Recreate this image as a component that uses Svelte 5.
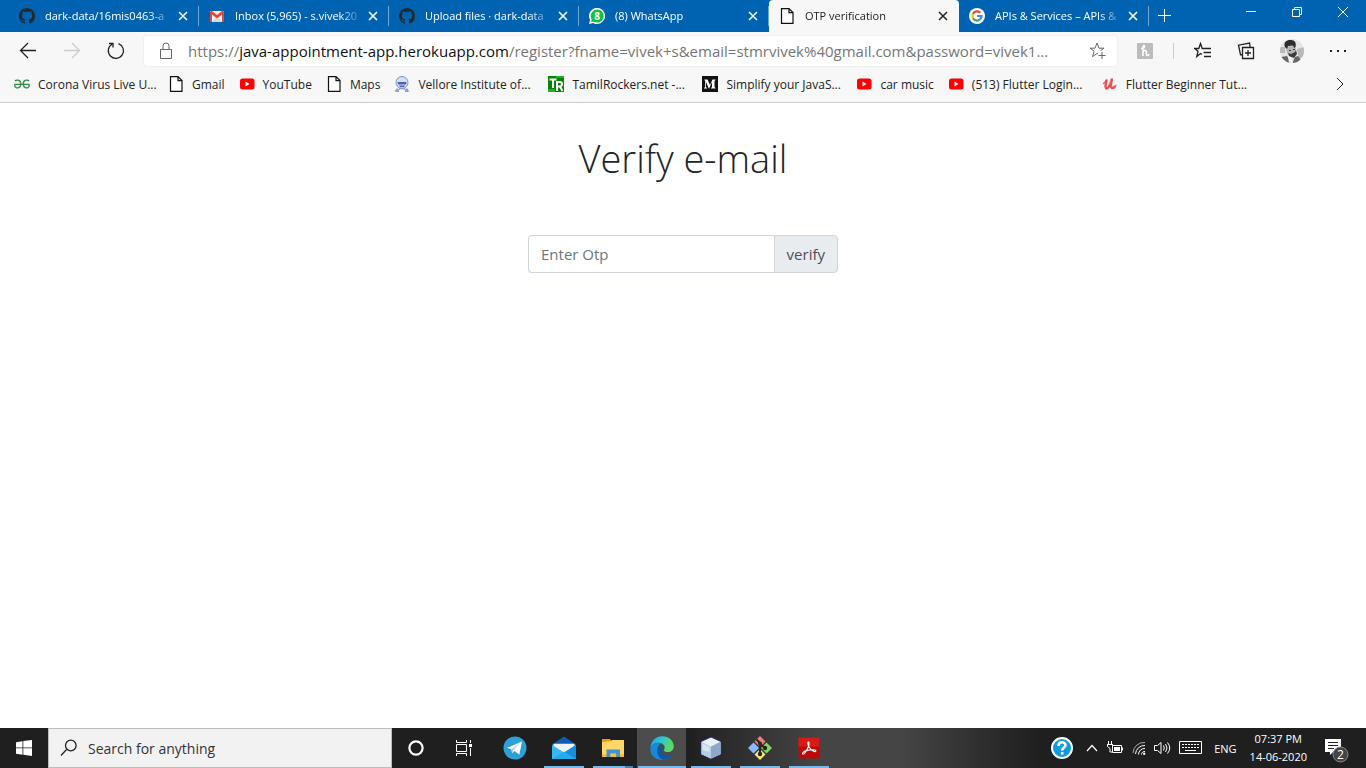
<script>
  const tabs = [
    { icon: 'github', title: 'dark-data/16mis0463-a' },
    { icon: 'gmail', title: 'Inbox (5,965) - s.vivek20' },
    { icon: 'github', title: 'Upload files · dark-data' },
    { icon: 'whatsapp', title: '(8) WhatsApp' },
    { icon: 'page', title: 'OTP verification', active: true },
    { icon: 'google', title: 'APIs & Services – APIs &' }
  ];
  const bookmarks = [
    { icon: 'gfg', title: 'Corona Virus Live U...', long: true },
    { icon: 'page', title: 'Gmail' },
    { icon: 'youtube', title: 'YouTube' },
    { icon: 'page', title: 'Maps' },
    { icon: 'vit', title: 'Vellore Institute of...', long: true },
    { icon: 'tr', title: 'TamilRockers.net -...', long: true },
    { icon: 'medium', title: 'Simplify your JavaS...', long: true },
    { icon: 'youtube', title: 'car music' },
    { icon: 'youtube', title: '(513) Flutter Login...', long: true },
    { icon: 'udemy', title: 'Flutter Beginner Tut...', long: true }
  ];
  const apps = [
    { icon: 'telegram', label: 'Telegram' },
    { icon: 'mail', label: 'Mail', open: true },
    { icon: 'folder', label: 'File Explorer', open: true, stacked: true },
    { icon: 'edge', label: 'Microsoft Edge', open: true, current: true },
    { icon: 'cube', label: 'NetBeans', open: true },
    { icon: 'git', label: 'Git', open: true },
    { icon: 'acrobat', label: 'Acrobat Reader', open: true }
  ];
</script>

{#snippet favicon(name)}
  <svg class="fav" viewBox="0 0 16 16" aria-hidden="true">
    {#if name === 'github'}
      <path fill="#24292e" d="M8 0C3.58 0 0 3.58 0 8c0 3.54 2.29 6.53 5.47 7.59.4.07.55-.17.55-.38 0-.19-.01-.82-.01-1.49-2.01.37-2.53-.49-2.69-.94-.09-.23-.48-.94-.82-1.13-.28-.15-.68-.52-.01-.53.63-.01 1.08.58 1.23.82.72 1.21 1.87.87 2.33.66.07-.52.28-.87.51-1.07-1.78-.2-3.64-.89-3.64-3.95 0-.87.31-1.59.82-2.15-.08-.2-.36-1.02.08-2.12 0 0 .67-.21 2.2.82.64-.18 1.32-.27 2-.27s1.36.09 2 .27c1.53-1.04 2.2-.82 2.2-.82.44 1.1.16 1.92.08 2.12.51.56.82 1.27.82 2.15 0 3.07-1.87 3.75-3.65 3.95.29.25.54.73.54 1.48 0 1.07-.01 1.93-.01 2.2 0 .21.15.46.55.38A8.01 8.01 0 0 0 16 8c0-4.42-3.58-8-8-8z" />
    {:else if name === 'gmail'}
      <path fill="#f2f2f2" d="M1 3h14v11H1z" />
      <path fill="#d9d9d9" d="M3 14l5-6 5 6z" />
      <path fill="#dd4b39" d="M1 14V4q0-1 1-1h1l5 4 5-4h1q1 0 1 1v10h-2V6.500L8 10.500 3 6.500V14z" />
    {:else if name === 'whatsapp'}
      <path fill="#fff" d="M0 16l1.100-4A8 8 0 1 1 4 14.900z" />
      <path fill="#10c143" d="M2 14l.7-2.500A6.500 6.500 0 1 1 5 13.700z" />
      <text x="8" y="12" text-anchor="middle" font-size="10" font-weight="700" fill="#fff">8</text>
    {:else if name === 'page'}
      <path fill="#fff" stroke="#111" stroke-width="1.200" d="M2.500.600h7.500l4 4v10.800H2.500zM10 .600v4h4" />
    {:else if name === 'google'}
      <circle cx="8" cy="8" r="8" fill="#fff" />
      <g fill="none" stroke-width="2.200">
        <path stroke="#ea4335" d="M3.900 5.900A4.600 4.600 0 0 1 11.300 4.800" />
        <path stroke="#fbbc05" d="M4 10.200a4.600 4.600 0 0 1-.1-4.300" />
        <path stroke="#34a853" d="M4 10.200a4.600 4.600 0 0 0 7 1.200" />
        <path stroke="#4285f4" d="M8 8h4.600a4.600 4.600 0 0 1-1.600 3.400" />
      </g>
    {:else if name === 'gfg'}
      <g fill="none" stroke="#2f8d46" stroke-width="1.300">
        <path d="M1 5.200C2 3.500 6.400 3.500 6.800 7.500 7 12.600 1.500 13 .900 10.300V8.300H8M15 5.200C14 3.500 9.600 3.500 9.200 7.500 9 12.600 14.500 13 15.100 10.300V8.300H8" />
      </g>
    {:else if name === 'youtube'}
      <rect x="1" y="2.500" width="14.500" height="11" rx="2.500" fill="#f00" />
      <path fill="#fff" d="M6.500 5.500v5L10.500 8z" />
    {:else if name === 'vit'}
      <circle cx="8" cy="6.500" r="6" fill="#d8def3" stroke="#8092cc" />
      <path fill="#4b65b0" d="M3.500 6h9l-.5 2.500H4zM5 9.500h6L10 11H6z" />
      <path fill="none" stroke="#8d9dd0" stroke-width="1.300" d="M3.500 12.500 2 14.500l2.500-.5L6 12.500h4l1.500 1.500 2.500.5-1.500-2M2 15.500h3M11 15.500h3" />
    {:else if name === 'tr'}
      <path fill="#078207" d="M0 0h16v16H0z" />
      <path fill="#1db51d" d="M8 0h8v2H8zM0 13h7v3H0z" />
      <path fill="none" stroke="#fff" stroke-width="2" d="M1.500 3.500h7M5 3v9M9 15V6h3q2 0 2 2.200T11 10.500H9m3 0 2.500 4.500" />
    {:else if name === 'medium'}
      <path fill="#111" d="M0 0h16v16H0z" />
      <path fill="#fff" d="M2.500 3.500h3L8 9l2.500-5.500h3V4l-1 1v6l1 1v.5H9V12l1-1V6l-2.800 6.500h-.4L4 6v5l1 1v.5H2V12l1.200-1V5l-.7-1z" />
    {:else if name === 'udemy'}
      <path fill="none" stroke="#eb5252" stroke-width="2.600" stroke-linecap="round" stroke-linejoin="round" d="M4.500 4.500C4 7 2.500 12 4.500 12.500 7 12.500 8.500 8 9.800 3.500 9 7 8.300 11.500 10 12q1.200.2 2.500-1" />
      <path fill="none" stroke="#eb5252" stroke-width="1.300" stroke-linecap="round" d="M1.500 7.500 4.500 4.500M12.500 11l1.500-1.500" />
    {/if}
  </svg>
{/snippet}

{#snippet appicon(name)}
  <svg class="app-icon" viewBox="0 0 24 24" aria-hidden="true">
    {#if name === 'telegram'}
      <circle cx="12" cy="12" r="11.500" fill="#2d9fd9" />
      <path fill="#fff" d="M4 11.800 19 5.500l-2.600 13-5-3.600-2.200 2.400-.8-4z" />
      <path fill="#aecfe2" d="m8.400 13.300 8-5.800-6.200 7-1 2.800z" />
    {:else if name === 'mail'}
      <path fill="#0a5eb5" d="M0 8.500 12 .500l12 8v5H0z" />
      <path fill="#f1f3f5" d="M1.500 7.800h21V11L12 18 1.500 11z" />
      <path fill="#37b8f6" d="M0 9l12 7.500L24 9v14H0z" />
      <path fill="#168de2" d="m24 9-12 7.500L24 23z" />
      <path fill="#25a9ef" d="m0 23 12-7.500L24 23z" />
    {:else if name === 'folder'}
      <path fill="#e79d08" d="M1 3h8l2 2.500H1z" />
      <path fill="#ffd668" d="M1 5.500 10 5l1-1h12v17H1z" />
      <path fill="#f5bf44" d="M1 18h22v3H1z" />
      <path fill="#3f94d1" d="M5.500 13.500h13.500v7.500h-3.800v-3.500H9.300V21H5.500z" />
    {:else if name === 'edge'}
      <defs>
        <linearGradient id="edgeTop" x1="0" y1="0" x2="1" y2=".35"><stop stop-color="#1c9ee6" /><stop offset=".5" stop-color="#30c6d0" /><stop offset="1" stop-color="#5cdb5c" /></linearGradient>
      </defs>
      <path fill="#168ad8" d="M.4 12.500C.7 7 6 4.500 11 7c-3 2-4.500 6-2.500 10 2.400 4 8.500 5.500 13.500 2.500-2.500 3.500-6 4.500-9.800 4.500C5.500 24-.2 19 .4 12.500z" />
      <path fill="#0c59a4" d="M9.400 10.200C5.500 14 7 20.500 12.500 23.800c4 .1 7.500-1.500 9.700-4.500.3-.6-.2-.8-.8-.5-4 2-9 .8-10-3.200-.5-2.200.2-4 1.500-5-1-.7-2.500-.8-3.500-.4z" />
      <path fill="url(#edgeTop)" d="M.5 11.500C1 4.600 6 .2 12.200.2 19 .2 23.800 5 23.800 10.500c0 3.500-2.800 5.500-5.800 5.500-2.500 0-4.500-1-4.300-1.800.2-.5 1-1.200 1-2.700C14.700 8.800 11.500 6.500 7.500 6.500 4 6.500 1.500 8.500.5 11.500z" />
    {:else if name === 'cube'}
      <path fill="#e8f1fb" stroke="#242c68" d="m12 1 10 4.500v13L12 23 2 18.500v-13z" />
      <path fill="#8ba9c7" d="m12 10.500 9.500-4.800v12.500L12 22.500z" />
      <path fill="#b7cde2" d="m2.500 5.700 9.500 4.800v12l-9.500-4.300z" />
      <path fill="#d7e6f3" d="m3.500 7.500 7 3.500v5l-7-2z" />
    {:else if name === 'git'}
      <path fill="#f07c80" d="m12 0 5.500 5.500L12 11 6.500 5.500z" />
      <path fill="#87b9ff" d="M5.500 6.500 11 12l-5.500 5.500L0 12z" />
      <path fill="#80d760" d="M18.500 6.500 24 12l-5.500 5.500L13 12z" />
      <path fill="#fce581" d="m12 13 5.500 5.500L12 24l-5.500-5.500z" />
      <path fill="none" stroke="#2c2522" stroke-width="2" d="M8.500 3.500 12 7v11M12 8l5 4" />
      <g fill="#2c2522"><circle cx="12" cy="7.500" r="2" /><circle cx="12" cy="18" r="2.200" /><circle cx="17" cy="12" r="2.200" /></g>
    {:else if name === 'acrobat'}
      <path fill="#b90b0b" d="M1.500 1.500h21v21h-21z" />
      <path fill="#d91b18" d="M1.500 1.500h21v9h-21z" />
      <path fill="none" stroke="#fff" stroke-width="1.100" d="M11.500 6c-1.500 0-.6 3.500 1.600 6.500 2 2.700 5.300 4 5.800 2.500.5-1.700-5.500-1.600-9.400-.4-3 1-4.700 2.400-3.900 3.400 1.300 1.400 4.500-4 6-8 .7-2 .8-4-.1-4z" />
    {/if}
  </svg>
{/snippet}

<div class="screen">
  <header>
    <div class="tabstrip">
      <div class="tabs">
        {#each tabs as tab}
          <div class="tab" class:active={tab.active}>
            {@render favicon(tab.icon)}
            <span class="tab-title">{tab.title}</span>
            <button class="close" aria-label="Close tab">
              <svg width="10" height="10" viewBox="0 0 10 10"><path d="m1 1 8 8M9 1 1 9" /></svg>
            </button>
          </div>
        {/each}
        <button class="newtab" aria-label="New tab">
          <svg width="14" height="14" viewBox="0 0 14 14"><path d="M6.500 0v13M0 6.500h13" /></svg>
        </button>
      </div>
      <div class="window-buttons">
        <button aria-label="Minimize"><svg width="12" height="12" viewBox="0 0 12 12"><path d="M1 5.500h10" /></svg></button>
        <button aria-label="Restore"><svg width="12" height="12" viewBox="0 0 12 12"><path d="M1.500 3.500h7v7h-7zM3.500 3V1.500h7v7H9" /></svg></button>
        <button aria-label="Close"><svg width="12" height="12" viewBox="0 0 12 12"><path d="m1 1 10 10M11 1 1 11" /></svg></button>
      </div>
    </div>

    <div class="toolbar">
      <div class="nav">
        <button aria-label="Back"><svg width="18" height="18" viewBox="0 0 18 18"><path d="M17 8.500H1.500M9 1 1.500 8.500 9 16" /></svg></button>
        <button aria-label="Forward" disabled><svg width="18" height="18" viewBox="0 0 18 18"><path d="M1 8.500h15.500M9 1l7.500 7.500L9 16" /></svg></button>
        <button aria-label="Refresh"><svg width="18" height="18" viewBox="0 0 18 18"><path d="M11.500 1.600A7.600 7.600 0 1 1 5 2.200M2 1.500h4v4" /></svg></button>
      </div>
      <div class="address">
        <svg class="grey" width="14" height="18" viewBox="0 0 14 18"><path d="M1.500 7.500h11v9h-11zM4 7V4q0-3 3-3t3 3v3" /></svg>
        <a class="url" href="#top"><span>https://</span>java-appointment-app.herokuapp.com<span>/register?fname=vivek+s&amp;email=stmrvivek%40gmail.com&amp;password=vivek1...</span></a>
        <button aria-label="Add to favorites">
          <svg class="grey" width="18" height="18" viewBox="0 0 18 18"><path d="M9 12 8 11.500l-4.500 3.200 1.600-5.500L1 6.200h5L8 1l2 5.200h5l-3.500 2.600M9.500 13.500h7M13 10v7" /></svg>
        </button>
      </div>
      <div class="tools">
        <button aria-label="Honey">
          <svg width="16" height="16" viewBox="0 0 16 16"><rect width="16" height="16" rx="1" fill="#bcbcbc" stroke="none" /><path stroke="#fff" stroke-width="1.500" d="M4 5.500c2.500 0 4-1 3.500-2.500S5.500 3 6 7v6m0-3.500c1-3 3.500-2.800 3.300 0C9 13 10.500 13.500 12 11" /></svg>
        </button>
        <i></i>
        <button aria-label="Favorites"><svg width="18" height="18" viewBox="0 0 18 18"><path stroke-width="1.300" d="M9.500 6.500H8.200L6.500 1.500l-1.700 5H.8L4 9.300 2.800 14.500l3.700-3L8 12.500M9 6.500h8M9.500 10.500H17M10 14.500h7" /></svg></button>
        <button aria-label="Collections"><svg width="18" height="18" viewBox="0 0 18 18"><path stroke-width="1.300" d="M5.500 5.500h11v11h-11zM11 8v6M8 11h6M5 12.500l-1.500.2-2-9.500 11-2.200.6 4" /></svg></button>
        <button aria-label="Profile">
          <svg width="24" height="24" viewBox="0 0 24 24">
            <defs><clipPath id="face"><circle cx="12" cy="12" r="12" /></clipPath></defs>
            <g clip-path="url(#face)" stroke="none">
              <path fill="#e4e4e4" d="M0 0h24v24H0z" />
              <path fill="#b9b9b9" d="M0 8h5v6H0zM17 10l7-2v9l-5 3z" />
              <path fill="#b5b5b5" d="m6 8 8-2 2 4-1 6-4 2-4-4z" />
              <path fill="#2c2c2c" d="M5 8C3 3 7 .5 11 1c4 0 5.500 3 4.500 7l-1.200 1-1.300-2.500-5 .5-1 3z" />
              <path fill="#3c3c3c" d="M9 11h2v1H9zM13 10h2v1h-2zM8 14l3 1 4-2 1-2 1 4-3 4-5-2z" />
              <path fill="#666" d="m1 18 6-1 4 7H2zM15 18l3-1 3 4-4 4h-5z" />
              <path fill="#f4f4f4" d="m8 17 3 2 2 5H9z" />
            </g>
          </svg>
        </button>
        <button aria-label="Settings and more"><svg width="18" height="18" viewBox="0 0 18 18"><g fill="#222" stroke="none"><path d="M1 8h2v2H1zM8 8h2v2H8zM15 8h2v2h-2z" /></g></svg></button>
      </div>
    </div>

    <nav class="bookmarks">
      {#each bookmarks as b}
        <a href="#top" class:long={b.long}>{@render favicon(b.icon)}<span>{b.title}</span></a>
      {/each}
      <button class="more" aria-label="More favorites"><svg width="8" height="14" viewBox="0 0 8 14"><path d="m1 1 6 6-6 6" /></svg></button>
    </nav>
  </header>

  <main>
    <h1>Verify e-mail</h1>
    <form onsubmit={(e) => e.preventDefault()}>
      <input type="text" placeholder="Enter Otp" aria-label="Enter Otp" />
      <button>verify</button>
    </form>
  </main>

  <footer>
    <button class="start" aria-label="Start">
      <svg width="16" height="16" viewBox="0 0 16 16"><path fill="#fff" d="M0 2.200 6.500 1.200v6.300H0zM7.300 1.100 16 0v7.500H7.300zM0 8.300h6.500v6.400L0 13.800zM7.300 8.300H16V16l-8.700-1.200z" /></svg>
    </button>
    <label class="search">
      <svg width="18" height="18" viewBox="0 0 18 18"><path stroke-width="1.300" d="M6.600 10.500 1 16.500" /><circle cx="10.800" cy="6.500" r="5.300" stroke-width="1.300" /></svg>
      <input type="text" placeholder="Search for anything" aria-label="Search for anything" />
    </label>
    <button class="system" aria-label="Cortana"><svg width="18" height="18" viewBox="0 0 18 18"><circle cx="9" cy="9" r="6.600" stroke-width="2.200" /></svg></button>
    <button class="system" aria-label="Task view"><svg width="18" height="18" viewBox="0 0 18 18"><path d="M1.500 1v2.500h10V1M1.500 5.500h10v7h-10zM1.500 17v-2.500h10V17M15.500 1v3M15.500 9v8" /><path fill="#fff" stroke="none" d="M14 5h3v3h-3z" /></svg></button>
    <div class="apps">
      {#each apps as app}
        <button class:open={app.open} class:current={app.current} class:stacked={app.stacked} aria-label={app.label}>{@render appicon(app.icon)}</button>
      {/each}
    </div>
    <div class="tray">
      <svg class="help" width="24" height="24" viewBox="0 0 24 24"><circle cx="12" cy="12" r="10" fill="#109bdc" stroke="#fff" stroke-width="2" /><path stroke="#fff" stroke-width="2.600" d="M8.500 10c0-5 7-4.500 7-1 0 2.500-3.300 2.500-3.300 5.500M12.200 16v2.500" /></svg>
      <svg width="12" height="8" viewBox="0 0 12 8"><path stroke-width="1.200" d="m1 7 5-5.500L11 7" /></svg>
      <svg width="18" height="14" viewBox="0 0 18 14"><path d="M6.500 4.500h9v7h-9zM16.500 6.500v3M2.500 0v3M5.500 0v3M1 3.500h6M1.500 3.500v2l2.500 2v3.500h2" /><path fill="#fff" stroke="none" d="M8 6h6v4H8z" /></svg>
      <svg width="14" height="14" viewBox="0 0 14 14"><path stroke="#aaa" d="M1 12A11 11 0 0 1 13 1.500" /><path d="M3.500 13a9 9 0 0 1 9.500-8.500M6.500 13.500a6 6 0 0 1 6.500-6M9.500 13.500a3 3 0 0 1 3.500-3" /><circle cx="12.200" cy="12.800" r="1.200" fill="#fff" stroke="none" /></svg>
      <svg width="17" height="14" viewBox="0 0 17 14"><path d="M.5 4.500h3l3.500-3v11l-3.500-3h-3zM9.500 4.500q1.500 2.500 0 5M11.500 3q3 4 0 8M13.500 1.500q4.500 5.500 0 11" /></svg>
      <svg width="24" height="14" viewBox="0 0 24 14"><path d="M.5.5h22v12H.5zM6 9.500h11" /><path stroke-dasharray="2 1" d="M3 3.500h17M3 6.500h17" /></svg>
      <span class="lang">ENG</span>
      <div class="clock"><span>07:37 PM</span><span>14-06-2020</span></div>
      <button class="notes" aria-label="2 notifications">
        <svg width="26" height="24" viewBox="0 0 26 24"><path fill="#fff" stroke="none" d="M1 0h16v13H9l-3 3v-3H1z" /><path stroke="#222" d="M4 3.500h10M4 6.500h10M4 9.500h6" /><circle cx="16.500" cy="15.500" r="7.500" fill="#444" stroke="#888" /><text x="16.500" y="20" text-anchor="middle" font-size="12" fill="#fff" stroke="none">2</text></svg>
      </button>
    </div>
  </footer>
</div>

<style>
  :global(body) { margin: 0; background: #fff; }
  .screen { min-height: 100vh; display: flex; flex-direction: column; font-family: "Open Sans", "Noto Sans", sans-serif; font-size: 12px; color: #222; }
  button, input { font: inherit; color: inherit; }
  button { display: flex; align-items: center; justify-content: center; padding: 0; border: 0; background: none; }
  a { color: inherit; text-decoration: none; }
  svg { display: block; flex: none; fill: none; stroke: currentColor; }
  .fav { width: 16px; height: 16px; stroke: none; }
  header { background: #f7f7f7; border-bottom: 1px solid #ccc; }

  .tabstrip { display: flex; justify-content: space-between; height: 32px; padding-left: 9px; background: #0063b1; color: #fff; font-size: 11px; }
  .tabs { display: flex; flex: 1; min-width: 0; }
  .tab { box-sizing: border-box; flex: 0 1 190px; min-width: 0; display: flex; align-items: center; padding: 0 10px; background: linear-gradient(#6fa6d3, #6fa6d3) right 6px / 1px 20px no-repeat; }
  .tab-title { flex: 1; min-width: 0; overflow: hidden; margin: 0 4px 0 10px; white-space: nowrap; line-height: 20px; mask-image: linear-gradient(to left, transparent, #000 24px); }
  .tab.active { background: #f7f7f7; color: #222; border-radius: 4px 4px 0 0; }
  .close { width: 12px; }
  .close svg { stroke-width: 1.500; }
  .newtab { width: 32px; }
  .window-buttons { display: flex; height: 23px; }
  .window-buttons button { width: 46px; }

  .toolbar { display: flex; align-items: center; height: 38px; }
  .nav { display: flex; width: 144px; padding-left: 6px; box-sizing: border-box; }
  .nav button { width: 44px; height: 32px; }
  .nav button:disabled { color: #ccc; }
  .nav svg { stroke-width: 1.300; }
  .grey { color: #666; }
  .address { flex: 1; min-width: 0; display: flex; align-items: center; gap: 15px; height: 30px; padding: 0 10px 0 15px; box-sizing: border-box; border-radius: 3px; background: #fff; box-shadow: 0 0 2px #ddd; }
  .url { flex: 1; min-width: 0; overflow: hidden; white-space: nowrap; font-size: 15px; line-height: 22px; color: #111; }
  .url span { color: #767676; }
  .tools { display: flex; align-items: center; gap: 25px; margin-left: 20px; margin-right: 19px; }
  .tools i { width: 1px; height: 16px; margin: 0 -5px; background: #ccc; }

  .bookmarks { display: flex; align-items: center; height: 32px; padding: 0 22px 4px 14px; box-sizing: border-box; }
  .bookmarks a { display: flex; align-items: center; gap: 8px; padding-right: 14px; white-space: nowrap; box-sizing: border-box; }
  .bookmarks a.long { flex: 0 1 154px; padding-right: 0; }
  .more { margin-left: auto; }

  main { flex: 1; display: flex; flex-direction: column; align-items: center; padding: 31px 16px; color: #212529; }
  h1 { margin: 0; font-size: 38px; line-height: 48px; font-weight: 300; }
  form { display: flex; width: 310px; max-width: 100%; height: 38px; margin-top: 53px; font-size: 15px; }
  form input { box-sizing: border-box; flex: 1; min-width: 0; padding: 0 12px; border: 1px solid #ced4da; border-right: 0; border-radius: 4px 0 0 4px; background: #fff; }
  form input::placeholder { color: #6c757d; opacity: 1; }
  form button { padding: 0 12px; border: 1px solid #ced4da; border-radius: 0 4px 4px 0; background: #e9ecef; color: #495057; }

  footer { display: flex; height: 40px; color: #fff; background: linear-gradient(90deg, #1f1f1f 50%, #454545 60%, #454545 66%, #1f1f1f 76%); }
  .start { width: 48px; }
  .start svg { stroke: none; }
  .search { box-sizing: border-box; width: 344px; display: flex; align-items: center; gap: 10px; padding: 0 12px 0 11px; border: 1px solid #bbb; background: #f2f2f2; color: #222; }
  .search input { flex: 1; min-width: 0; padding: 0; border: 0; background: none; font-size: 14px; }
  .search input::placeholder { color: #333; opacity: 1; }
  .system { width: 48px; }
  .apps { display: flex; padding-left: 2px; }
  .apps button { width: 49px; background: linear-gradient(#76b9ed, #76b9ed) center bottom / 40px 2px no-repeat; }
  .apps button:not(.open) { background: none; }
  .apps button.current { background: linear-gradient(#76b9ed, #76b9ed) center bottom / 48px 2px no-repeat, #4c4c4c; }
  .apps button.stacked { background: linear-gradient(90deg, #76b9ed 32px, #4f82ab 32px) center bottom / 40px 2px no-repeat; }
  .app-icon { width: 24px; height: 24px; stroke: none; }
  .tray { display: flex; align-items: center; gap: 8px; margin-left: auto; font-size: 11px; }
  .help { margin-right: 4px; }
  .lang { margin-left: 3px; }
  .clock { display: flex; flex-direction: column; align-items: center; line-height: 18px; margin-left: 5px; }
  .notes { margin: 5px 16px 0 9px; }
</style>
